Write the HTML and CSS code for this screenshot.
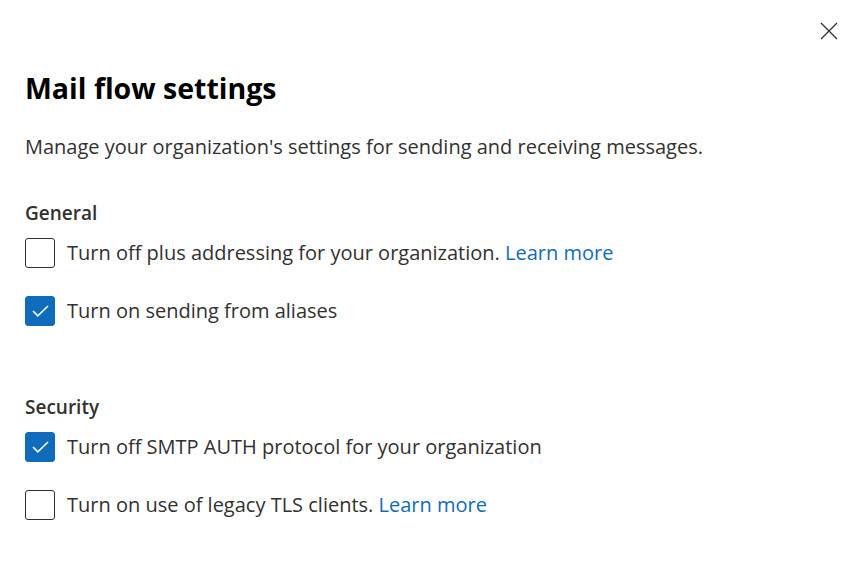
FILE: index.html
```html
<!DOCTYPE html>
<html lang="en">
<head>
  <meta charset="UTF-8" />
  <title>Mail flow settings</title>
  <link rel="stylesheet" href="styles.css">
</head>
<body>
  <div class="panel">
    <div class="panel-top">
      <button class="close" aria-label="Close">
        <svg width="18" height="18" viewBox="0 0 18 18"><path d="M1 1 L17 17 M17 1 L1 17" stroke="#323130" stroke-width="1.3" fill="none"/></svg>
      </button>
    </div>
    <h1>Mail flow settings</h1>
    <p class="desc">Manage your organization's settings for sending and receiving messages.</p>

    <div class="group">
      <h2>General</h2>
      <label class="check">
        <span class="box"></span>
        <span>Turn off plus addressing for your organization. <a href="#">Learn more</a></span>
      </label>
      <label class="check">
        <span class="box on"><svg class="tick" viewBox="0 0 17 12"><path d="M1 6 L5.8 10.8 L16 1" /></svg></span>
        <span>Turn on sending from aliases</span>
      </label>
    </div>

    <div class="group">
      <h2>Security</h2>
      <label class="check">
        <span class="box on"><svg class="tick" viewBox="0 0 17 12"><path d="M1 6 L5.8 10.8 L16 1" /></svg></span>
        <span>Turn off SMTP AUTH protocol for your organization</span>
      </label>
      <label class="check">
        <span class="box"></span>
        <span>Turn on use of legacy TLS clients. <a href="#">Learn more</a></span>
      </label>
    </div>
  </div>
</body>
</html>
```

FILE: styles.css
```css
body {
  margin: 0;
  background: #fff;
  font-family: "Open Sans", "Noto Sans", Arial, sans-serif;
  color: #323130;
}
.panel {
  padding: 0 16px 0 25px;
}
.panel-top {
  display: flex;
  justify-content: flex-end;
  padding-top: 22px;
}
.close {
  border: none;
  background: none;
  padding: 0;
  width: 18px;
  height: 18px;
  cursor: pointer;
}
h1 {
  margin: 30px 0 0;
  font-size: 28.5px;
  line-height: 36px;
  font-weight: 700;
  color: #000;
}
.desc {
  margin: 27px 0 0;
  font-size: 20px;
  line-height: 28px;
}
.group {
  margin-top: 39px;
}
.group + .group {
  margin-top: 68px;
}
h2 {
  margin: 0 0 12px;
  font-size: 19px;
  line-height: 26px;
  font-weight: 600;
}
.check {
  display: flex;
  align-items: center;
  gap: 12px;
  font-size: 20px;
  line-height: 30px;
  margin-bottom: 28px;
  cursor: pointer;
}
.box {
  width: 28px;
  height: 28px;
  border: 1px solid #323130;
  border-radius: 3px;
  display: flex;
  align-items: center;
  justify-content: center;
  flex-shrink: 0;
}
.box.on {
  background: #0f6cbd;
  border-color: #0f6cbd;
}
.tick {
  width: 17px;
  height: 12px;
  fill: none;
  stroke: #fff;
  stroke-width: 1.6;
}
a {
  color: #0f6cbd;
  text-decoration: none;
}
```
